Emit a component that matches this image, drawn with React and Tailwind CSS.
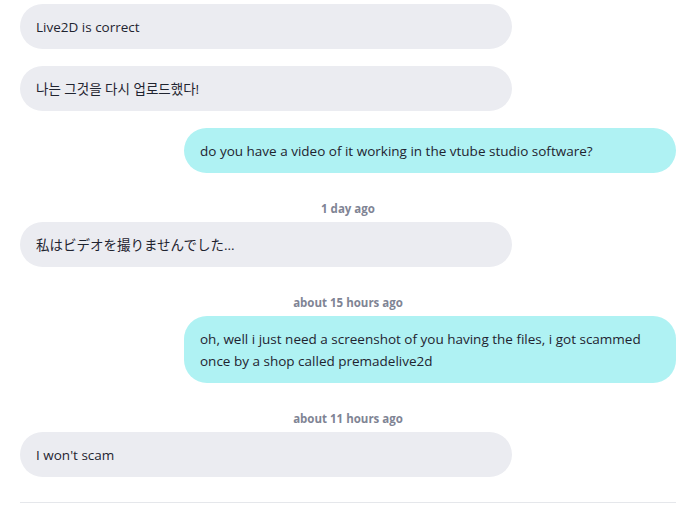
const messages = [
	{ id: 1, mine: false, text: 'Live2D is correct' },
	{ id: 2, mine: false, text: '나는 그것을 다시 업로드했다!' },
	{ id: 3, mine: true, text: 'do you have a video of it working in the vtube studio software?' },
	{ id: 4, mine: false, time: '1 day ago', text: '私はビデオを撮りませんでした...' },
	{
		id: 5,
		mine: true,
		time: 'about 15 hours ago',
		text: 'oh, well i just need a screenshot of you having the files, i got scammed once by a shop called premadelive2d',
	},
	{ id: 6, mine: false, time: 'about 11 hours ago', text: "I won't scam" },
];

const Message = ({ mine, time, text }) => (
	<div className="flex flex-col">
		{time && (
			<p className="mt-[11px] mb-[5px] text-center text-[11.5px] leading-4 font-bold text-[#7f8494]">
				{time}
			</p>
		)}
		<div className={`flex ${mine ? 'justify-end' : 'justify-start'}`}>
			<div
				className={`w-3/4 rounded-[23px] px-4 py-[11.5px] text-[13.5px] leading-[22px] text-[#1f2430] ${
					mine ? 'bg-[#aff2f3]' : 'bg-[#ebecf1]'
				}`}
			>
				{text}
			</div>
		</div>
	</div>
);

export default function App() {
	return (
		<div
			className="h-screen overflow-hidden bg-white pl-5 pr-2 pt-1"
			style={{ fontFamily: '"Open Sans", "Noto Sans CJK KR", "Noto Sans CJK JP", sans-serif' }}
		>
			<div className="flex flex-col gap-[17px]">
				{messages.map((m) => (
					<Message key={m.id} {...m} />
				))}
			</div>
			<div className="mt-[25px] border-t border-[#e5e7eb]" />
		</div>
	);
}
